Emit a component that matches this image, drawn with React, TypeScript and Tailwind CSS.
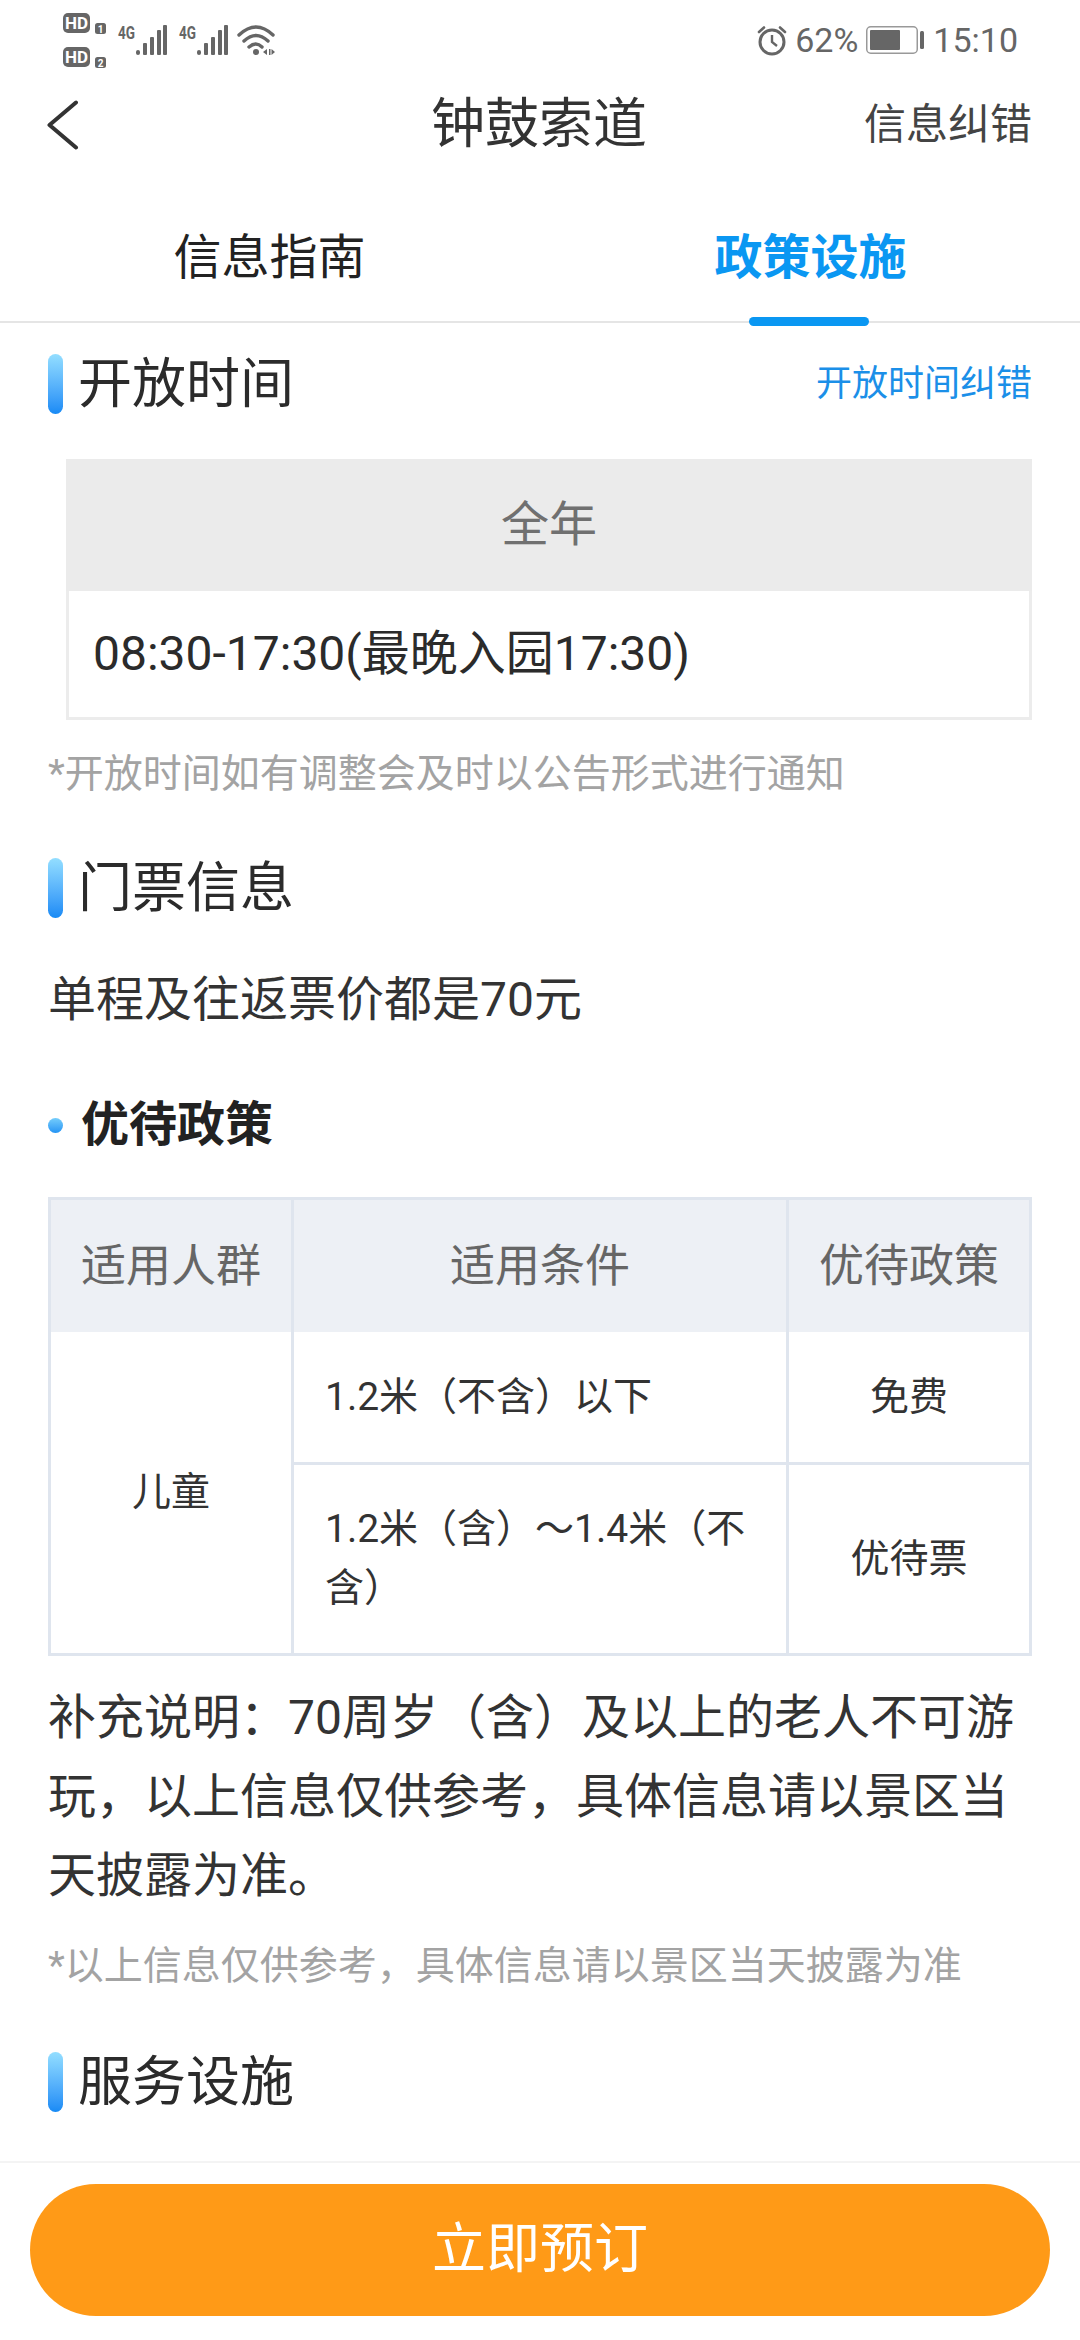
import React from "react";

const Signal = ({ x }: { x: number }) => (
  <g fill="#666">
    <text x={x} y={38.5} fontSize={18} fontWeight={700} fontFamily="Roboto, sans-serif" textLength={17} lengthAdjust="spacingAndGlyphs">4G</text>
    <rect x={x + 18} y={50} width={4} height={5} rx={2} />
    <rect x={x + 25} y={43} width={4} height={12} rx={1} />
    <rect x={x + 32} y={37} width={4} height={18} rx={1} />
    <rect x={x + 39} y={30} width={4} height={25} rx={1} />
    <rect x={x + 45} y={25} width={4} height={30} rx={1} />
  </g>
);

const Badge = ({ y, n }: { y: number; n: string }) => (
  <g>
    <rect x={13} y={y} width={27} height={20} rx={5} fill="#666" />
    <text x={26.5} y={y + 16} fontSize={17} fontWeight={700} fill="#fff" textAnchor="middle" fontFamily="Roboto, sans-serif">HD</text>
    <rect x={45} y={y + 10} width={11} height={11} rx={2.5} fill="#666" />
    <text x={50.5} y={y + 19.5} fontSize={10} fontWeight={700} fill="#fff" textAnchor="middle" fontFamily="Roboto, sans-serif">{n}</text>
  </g>
);

const StatusLeft = () => (
  <svg width="226" height="72" viewBox="50 0 226 72" className="shrink-0">
    <g transform="translate(50 0)">
      <Badge y={13} n="1" />
      <Badge y={47} n="2" />
    </g>
    <Signal x={118} />
    <Signal x={179} />
    <g fill="none" stroke="#666" strokeWidth={3.4} strokeLinecap="round">
      <path d="M239 35 Q256 19 273 35" />
      <path d="M244 41 Q256 30 268 41" />
      <path d="M249 47 Q256 41 262 47" />
    </g>
    <circle cx={256} cy={52} r={3} fill="#666" />
    <path d="M267 49 L263 52 L267 55 Z M269 49 H270.5 V55 H269 Z M271.5 49 L275 52 L271.5 55 Z" fill="#666" />
  </svg>
);

const Alarm = () => (
  <svg width="32" height="32" viewBox="0 0 32 32" className="shrink-0">
    <circle cx="16" cy="18" r="12" fill="none" stroke="#666" strokeWidth="3" />
    <path d="M16 11 V18 L21 22" fill="none" stroke="#666" strokeWidth="2.4" />
    <path d="M3 8 L8 3.5 M29 8 L24 3.5" fill="none" stroke="#666" strokeWidth="2.6" strokeLinecap="round" />
  </svg>
);

const Battery = () => (
  <svg width="58" height="28" viewBox="0 0 58 28" className="shrink-0">
    <rect x="0.75" y="0.75" width="50.5" height="26.5" rx="4" fill="none" stroke="#999" strokeWidth="1.5" />
    <rect x="4" y="4" width="30" height="20" rx="1" fill="#666" />
    <rect x="54" y="5" width="4" height="18" rx="1.5" fill="#666" />
  </svg>
);

const SectionTitle = ({ title, right, mt }: { title: string; right?: string; mt: string }) => (
  <div className={`flex items-center h-[60px] ${mt}`}>
    <span className="w-[15px] h-[60px] rounded-full bg-gradient-to-b from-[#93deff] to-[#168af5]" />
    <span className="ml-[15px] pt-[2px] text-[54px] leading-[60px] text-[#2b2b2b]">{title}</span>
    {right && <span className="ml-auto text-[36px] leading-[60px] text-[#1b8fe8]">{right}</span>}
  </div>
);

const headCell = "flex items-center justify-center pt-[2px] bg-[#edf0f5] text-[45px] text-[#666]";
const bodyCell = "flex items-center text-[39px] leading-[59px] text-[#333]";

export default function App() {
  return (
    <div className="flex flex-col w-[1080px] h-[2340px] bg-white overflow-hidden font-[Roboto,'Noto_Sans_CJK_SC',sans-serif]">
      <div className="flex items-center h-[72px] shrink-0 pl-[50px] pr-[62px]">
        <StatusLeft />
        <div className="ml-auto flex items-center pt-[8px] text-[34px] leading-[64px] text-[#666]">
          <Alarm />
          <span className="ml-[7px]">62%</span>
          <span className="ml-[8px]"><Battery /></span>
          <span className="ml-[9px]">15:10</span>
        </div>
      </div>

      <div className="flex items-center h-[106px] shrink-0 pl-[46px] pr-[48px]">
        <svg width="34" height="50" viewBox="0 0 34 50" className="shrink-0">
          <path d="M30 2.5 L3.5 25 L30 47.5" fill="none" stroke="#333" strokeWidth="4" strokeLinecap="round" strokeLinejoin="round" />
        </svg>
        <div className="flex-1 text-center text-[54px] leading-[70px] text-[#333] pl-[134px]">钟鼓索道</div>
        <div className="text-[42px] leading-[60px] text-[#444]">信息纠错</div>
      </div>

      <div className="flex h-[145px] shrink-0 border-b-2 border-[#e5e5e5] pt-[16px]">
        <div className="flex-1 flex items-center justify-center text-[48px] text-[#222]">信息指南</div>
        <div className="relative flex-1 flex items-center justify-center pl-[2px] text-[48px] font-bold text-[#0a97f2]">
          政策设施
          <span className="absolute left-[210px] bottom-[-5px] w-[120px] h-[9px] rounded-full bg-[#0a97f2]" />
        </div>
      </div>

      <div className="flex-1 min-h-0 overflow-hidden px-[48px]">
        <SectionTitle title="开放时间" right="开放时间纠错" mt="mt-[31px]" />
        <div className="mt-[45px] ml-[18px]">
          <div className="flex items-center justify-center h-[132px] bg-[#ebebeb] text-[48px] text-[#707070]">全年</div>
          <div className="flex items-center h-[129px] border-[3px] border-t-0 border-[#ececec] pl-[24px] text-[48px] text-[#2b2b2b]">
            08:30-17:30(最晚入园17:30)
          </div>
        </div>
        <p className="mt-[24px] text-[39px] leading-[60px] text-[#a3a3a3] whitespace-nowrap">*开放时间如有调整会及时以公告形式进行通知</p>

        <SectionTitle title="门票信息" mt="mt-[54px]" />
        <p className="mt-[52px] text-[48px] leading-[60px] text-[#333]">单程及往返票价都是70元</p>

        <div className="flex items-center h-[60px] mt-[65px]">
          <span className="w-[15px] h-[15px] rounded-full bg-gradient-to-b from-[#74cdfb] to-[#2294f4]" />
          <span className="ml-[18px] text-[48px] leading-[60px] font-bold text-[#222]">优待政策</span>
        </div>

        <div className="mt-[42px] grid grid-cols-[243px_495px_240px] grid-rows-[132px_133px_188px] border-[3px] border-[#dfe5ee]">
          <div className={`${headCell} border-r-[3px] border-[#dfe5ee]`}>适用人群</div>
          <div className={`${headCell} border-r-[3px] border-[#dfe5ee]`}>适用条件</div>
          <div className={headCell}>优待政策</div>

          <div className={`${bodyCell} row-span-2 justify-center border-r-[3px] border-[#dfe5ee]`}>儿童</div>
          <div className={`${bodyCell} pl-[31px] pr-[28px] border-r-[3px] border-b-[3px] border-[#dfe5ee]`}>1.2米（不含）以下</div>
          <div className={`${bodyCell} justify-center border-b-[3px] border-[#dfe5ee]`}>免费</div>
          <div className={`${bodyCell} pl-[31px] pr-[25px] border-r-[3px] border-[#dfe5ee]`}>1.2米（含）～1.4米（不含）</div>
          <div className={`${bodyCell} justify-center`}>优待票</div>
        </div>

        <p className="mt-[22px] text-[48px] leading-[79px] text-[#333]">
          补充说明：70周岁（含）及以上的老人不可游玩，以上信息仅供参考，具体信息请以景区当天披露为准。
        </p>
        <p className="mt-[21px] text-[39px] leading-[60px] text-[#a3a3a3] whitespace-nowrap">*以上信息仅供参考，具体信息请以景区当天披露为准</p>

        <SectionTitle title="服务设施" mt="mt-[56px]" />
      </div>

      <div className="shrink-0 h-[179px] border-t-2 border-[#f4f4f4] pt-[21px] px-[30px]">
        <button className="w-full h-[132px] pb-[2px] rounded-full bg-[#ff9a17] text-[54px] text-white">立即预订</button>
      </div>
    </div>
  );
}
